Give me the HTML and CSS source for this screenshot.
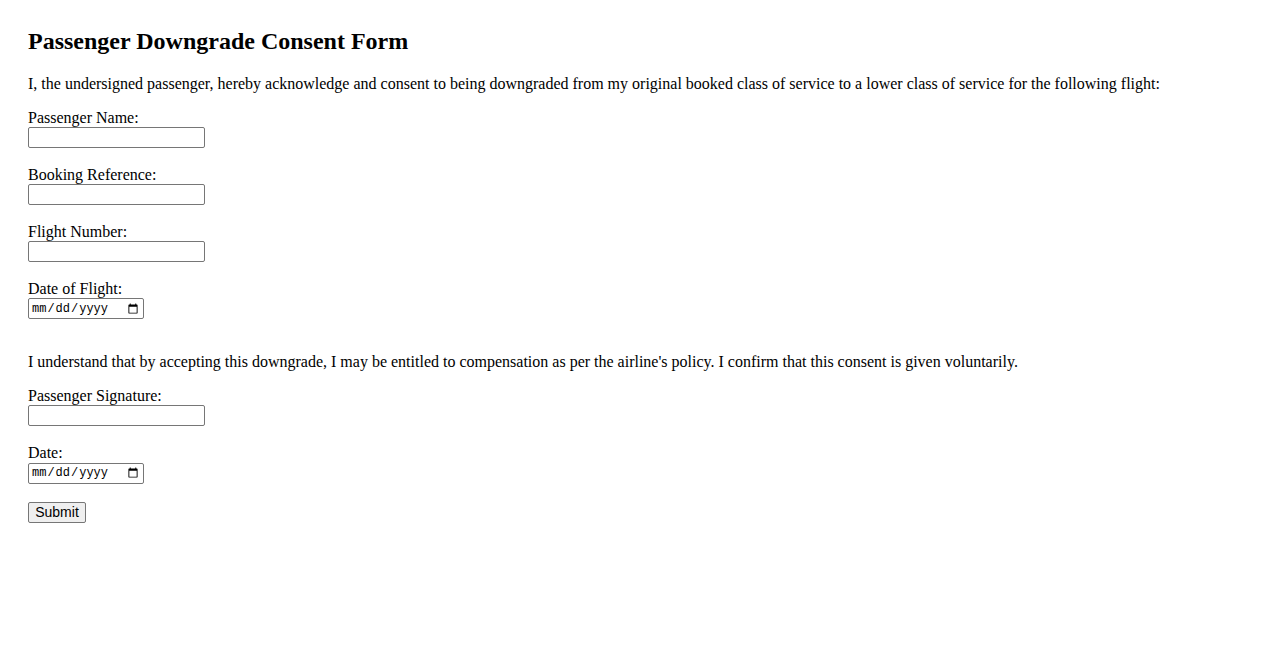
FILE: index.html
```html
<!DOCTYPE html>
<html lang="en">
<head>
<meta charset="utf-8">
<title>Passenger Downgrade Consent Form</title>
<link rel="stylesheet" href="styles.css">
</head>
<body>
<h2 class="title">Passenger Downgrade Consent Form</h2>
<p class="para">I, the undersigned passenger, hereby acknowledge and consent to being downgraded from my original booked class of service to a lower class of service for the following flight:</p>
<form class="form">
<label class="label" for="name">Passenger Name:</label><br>
<input class="text-input" type="text" id="name"><br><br>
<label class="label" for="ref">Booking Reference:</label><br>
<input class="text-input" type="text" id="ref"><br><br>
<label class="label" for="flight">Flight Number:</label><br>
<input class="text-input" type="text" id="flight"><br><br>
<label class="label" for="fdate">Date of Flight:</label><br>
<input class="date-input" type="date" id="fdate"><br><br>
<p class="para">I understand that by accepting this downgrade, I may be entitled to compensation as per the airline's policy. I confirm that this consent is given voluntarily.</p>
<label class="label" for="sig">Passenger Signature:</label><br>
<input class="text-input" type="text" id="sig"><br><br>
<label class="label" for="date">Date:</label><br>
<input class="date-input" type="date" id="date"><br><br>
<button class="submit" type="submit">Submit</button>
</form>
</body>
</html>
```

FILE: styles.css
```css
body {
  margin: 8px;
  padding: 20px;
  font-family: "Liberation Serif", "Times New Roman", serif;
  font-size: 16px;
  color: #000;
  background: #fff;
}
.title {
  margin: 0 0 19.92px 0;
  font-size: 24px;
  font-weight: bold;
}
.para {
  margin: 16px 0;
}
.form {
  margin: 0;
}
.text-input {
  box-sizing: border-box;
  width: 177px;
  height: 21px;
  margin: 0;
  padding: 1px 2px;
  border: 1px solid #767676;
  border-radius: 2px;
  font-family: "Liberation Sans", Arial, sans-serif;
  font-size: 13.33px;
}
.date-input {
  box-sizing: border-box;
  width: 116px;
  height: 21px;
  margin: 0;
  padding: 1px 2px;
  border: 1px solid #767676;
  border-radius: 2px;
  font-family: "Liberation Mono", "DejaVu Sans Mono", monospace;
  font-size: 12px;
}
.submit {
  box-sizing: border-box;
  width: 58px;
  height: 21px;
  margin: 0;
  padding: 1px 4px;
  border: 1px solid #767676;
  border-radius: 2px;
  background: #efefef;
  font-family: "Liberation Sans", Arial, sans-serif;
  font-size: 14px;
  color: #000;
}
```
